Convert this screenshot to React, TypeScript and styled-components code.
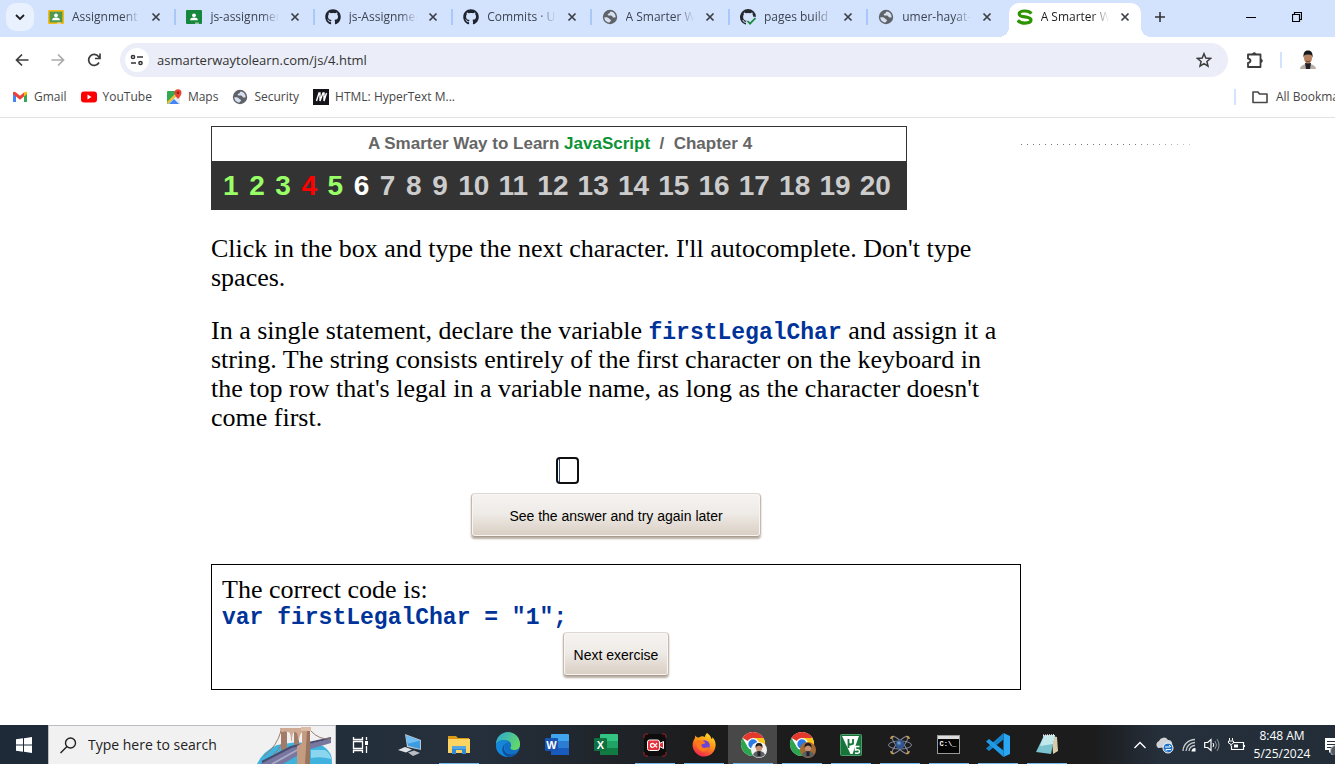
import React from 'react';
import styled, { createGlobalStyle, css } from 'styled-components';
import { FaGithub } from 'react-icons/fa';

const uiFont = '"Open Sans", "Noto Sans", sans-serif';
const sans = '"Liberation Sans", Arial, sans-serif';

const GlobalStyle = createGlobalStyle`
  *, *::before, *::after { box-sizing: border-box; }
  body { margin: 0; background: #fff; overflow: hidden; }
  button, input { font: inherit; color: inherit; margin: 0; padding: 0; }
  button { background: none; border: 0; }
  a { color: inherit; text-decoration: none; }
  svg { display: block; flex: none; }
`;

const Screen = styled.div`
  min-height: 100vh;
  display: flex;
  flex-direction: column;
  overflow: hidden;
`;

/* Browser tabs */
const TabStrip = styled.header`
  display: flex;
  align-items: center;
  height: 37px;
  padding: 0 0 4px 6px;
  background: #d3e2fd;
  font: 12px/16px ${uiFont};
  color: #3c4450;
`;
const TabSearch = styled.button`
  display: grid;
  place-items: center;
  flex: none;
  width: 28px;
  height: 28px;
  margin-right: 6px;
  border-radius: 10px;
  background: #e9f0fe;
`;
const TabList = styled.div`
  display: flex;
  align-self: stretch;
  gap: 6px;
  flex: 0 1 1101px;
  min-width: 0;
`;
const Tab = styled.div<{ $active?: boolean; $divided?: boolean }>`
  position: relative;
  display: flex;
  align-items: center;
  gap: 8px;
  flex: 1 1 0;
  min-width: 0;
  padding: 0 8px;
  ${p => p.$active && css`
    margin: 3px 0 -4px;
    padding-bottom: 7px;
    border-radius: 10px 10px 0 0;
    background: #fff;
    color: #1f1f1f;
    &::before, &::after {
      content: '';
      position: absolute;
      bottom: 0;
      width: 10px;
      height: 10px;
    }
    &::before { left: -10px; background: radial-gradient(circle at 0 0, transparent 10px, #fff 10px); }
    &::after { right: -10px; background: radial-gradient(circle at 100% 0, transparent 10px, #fff 10px); }
  `}
  ${p => p.$divided && css`
    &::after {
      content: '';
      position: absolute;
      right: -4px;
      top: 9px;
      width: 2px;
      height: 16px;
      background: #a8c7fa;
    }
  `}
`;
const TabTitle = styled.a`
  flex: 1;
  min-width: 0;
  overflow: hidden;
  white-space: nowrap;
  mask-image: linear-gradient(90deg, #000 75%, transparent);
`;
const IconButton = styled.button<{ $w?: number }>`
  display: grid;
  place-items: center;
  flex: none;
  width: ${p => p.$w ?? 16}px;
  height: 28px;
`;
const WindowControls = styled.div`
  display: flex;
  margin-left: auto;
  padding-right: 15px;
`;

/* Address bar */
const Toolbar = styled.nav`
  display: flex;
  align-items: center;
  height: 46px;
  padding: 0 9px 0 4px;
  color: #474747;
`;
const Omnibox = styled.label`
  display: flex;
  align-items: center;
  flex: 1;
  min-width: 0;
  height: 34px;
  margin: 0 9px 0 8px;
  padding: 0 6px 0 5px;
  border-radius: 17px;
  background: #ebeef8;
`;
const SiteInfo = styled.span`
  display: grid;
  place-items: center;
  width: 24px;
  height: 24px;
  margin-right: 8px;
  border-radius: 50%;
  background: #fff;
`;
const UrlInput = styled.input`
  flex: 1;
  min-width: 0;
  border: 0;
  outline: 0;
  background: none;
  font: 13px/20px ${uiFont};
  color: #333;
`;
const Rule = styled.span`
  flex: none;
  width: 2px;
  height: 16px;
  background: #d3e2fd;
`;
const ToolbarRule = styled(Rule)`
  margin: 0 8px 0 7px;
`;

/* Bookmarks */
const Bookmarks = styled.nav`
  display: flex;
  align-items: center;
  height: 35px;
  padding: 0 0 7px 12px;
  border-bottom: 1px solid #dfe1e5;
  font: 12px/16px ${uiFont};
  color: #474747;
`;
const Bookmark = styled.a`
  display: flex;
  align-items: center;
  gap: 6px;
  flex: none;
  margin-right: 14px;
  white-space: nowrap;
`;
const AllBookmarks = styled.div`
  display: flex;
  align-items: center;
  gap: 16px;
  flex: none;
  width: 101px;
  margin-left: auto;
  overflow: hidden;
  white-space: nowrap;
`;
const FolderLink = styled(Bookmark)`
  gap: 8px;
`;

/* Lesson */
const Page = styled.main`
  display: flex;
  align-items: flex-start;
  flex: 1;
  padding: 8px 0 0 211px;
`;
const Lesson = styled.article`
  flex: 0 1 810px;
  min-width: 0;
  font: 26px/29px "Liberation Serif", "Times New Roman", serif;
  color: #000;
`;
const DottedLine = styled.div`
  flex: 0 1 170px;
  height: 1px;
  margin-top: 18px;
  background: repeating-linear-gradient(90deg, #777 0 1px, #fff 1px 6px);
  mask-image: linear-gradient(90deg, #000 65%, #0006);
`;
const ChapterBox = styled.section`
  max-width: 696px;
  border: 1px solid #333;
  background: #333;
  font-family: ${sans};
  font-weight: bold;
`;
const ChapterTitle = styled.h1`
  margin: 0;
  padding-left: 2px;
  background: #fff;
  font-size: 17px;
  line-height: 34px;
  text-align: center;
  white-space: pre;
  color: #666;
  em { font-style: normal; color: #0b9335; }
`;
const ChapterNav = styled.nav`
  display: flex;
  justify-content: space-between;
  padding: 2px 15px 0 11px;
  font-size: 28px;
  line-height: 46px;
`;
const Chapter = styled.a<{ $color: string }>`
  min-width: 17px;
  color: ${p => p.$color};
`;
const Paragraph = styled.p`
  max-width: 802px;
  margin: 24px 0;
`;
const Code = styled.code`
  font: bold 23px/23px "Liberation Mono", "Courier New", monospace;
  color: #039;
`;
const AnswerRow = styled.div`
  display: flex;
  justify-content: center;
  margin-top: 25px;
  padding-right: 97px;
`;
const CharInput = styled.input`
  width: 23px;
  height: 27px;
  border: 2px solid #101010;
  border-radius: 4px;
  outline: 0;
  background: linear-gradient(#2b4a80, #2b4a80) 1px 0 / 1px 100% no-repeat #fff;
`;
const Centered = styled.div`
  display: flex;
  justify-content: center;
`;
const Actions = styled(Centered)`
  margin-top: 9px;
`;
const BeigeButton = styled.button<{ $w: number }>`
  width: ${p => p.$w}px;
  height: 44px;
  padding-top: 2px;
  border: 1px solid #c3bbb3;
  border-top-color: #ddd8d4;
  border-bottom-color: #a99d92;
  border-radius: 4px;
  background: linear-gradient(#f5f3f1, #efebe7 45%, #d9cec2);
  box-shadow: inset 0 0 0 1px #f8f5f2, 0 2px 2px #b7ada3;
  font: 14px/20px ${sans};
  color: #000;
`;
const Solution = styled.section`
  margin-top: 27px;
  padding: 11px 10px 13px;
  border: 1px solid #000;
`;
const SolutionText = styled.p`
  margin: 0;
  line-height: 28px;
  code { display: block; line-height: 28px; }
`;

/* Taskbar */
const Taskbar = styled.footer`
  display: flex;
  height: 39px;
  background: linear-gradient(90deg, #1e2a38, #25303c 36%, #1c1c1d 52%, #1c1c1d 82%, #25303c 87%, #222d38);
  font: 12px/18px ${uiFont};
  color: #fff;
`;
const StartButton = styled.button`
  display: grid;
  place-items: center;
  flex: none;
  width: 48px;
`;
const SearchBox = styled.label`
  display: flex;
  align-items: center;
  flex: none;
  width: 288px;
  padding: 0 2px 0 11px;
  border: solid #b9bcc0;
  border-width: 1px 1px 0;
  background: #f1f1f1;
  color: #222;
`;
const SearchInput = styled.input`
  flex: 1;
  min-width: 0;
  margin-left: 11px;
  border: 0;
  outline: 0;
  background: none;
  font: 14px/20px ${uiFont};
  &::placeholder { color: #222; opacity: 1; }
`;
const TaskButtons = styled.div`
  display: flex;
`;
const TaskButton = styled.button<{ $open?: boolean; $active?: boolean }>`
  display: grid;
  place-items: center;
  flex: none;
  width: 49px;
  background: ${p => (p.$active ? '#484848' : 'none')};
  ${p => p.$open && css`
    background-image: linear-gradient(#76b9ed, #76b9ed);
    background-size: 40px 1px;
    background-position: bottom center;
    background-repeat: no-repeat;
  `}
`;
const Tray = styled.div`
  display: flex;
  align-items: center;
  margin-left: auto;
`;
const Clock = styled.time`
  width: 66px;
  margin-right: 10px;
  text-align: center;
  white-space: nowrap;
`;

type IconProps = { children: React.ReactNode; w?: number; h?: number };
const Svg = ({ children, w = 16, h = w }: IconProps) => (
  <svg width={w} height={h} viewBox={`0 0 ${w} ${h}`} fill="none" aria-hidden="true">{children}</svg>
);

const Classroom = ({ frame, board }: { frame: string; board: string }) => (
  <Svg>
    <rect x="0" y="1" width="16" height="14" rx="1" fill={frame} />
    <rect x="1.6" y="2.6" width="12.8" height="10.8" fill={board} />
    <circle cx="8" cy="6.3" r="1.9" fill="#fff" />
    <path d="M4 11.2c.4-2 2-2.6 4-2.600s3.600.6 4 2.600z" fill="#fff" />
    <path d="M9 13.400h4V15H9z" fill="#e8e8e8" opacity=".6" />
  </Svg>
);
const Globe = () => (
  <Svg>
    <circle cx="8" cy="8" r="7.2" fill="#5f6368" />
    <path d="M8.500 2.400c-1 .8-.3 1.900-1.700 2.200-1.500.3-1.500 1.600-.3 1.900 1.700.4 3.300-.3 3.900 1 .5 1.300 1.800.9 3.300.700C13.700 5 11.500 2.700 8.500 2.400zM2.300 8.200c1.800-.2 4.100 0 4.700 1.200.5 1.100 1.900.7 2 1.900.1 1.300-1.300 1-1.400 2.300C4.600 13.400 2.300 11 2.300 8.200z" fill="#d6e0f0" />
  </Svg>
);
const SIcon = () => (
  <Svg><path d="M14.300 4.600C13 2.800 10.800 2 8 2 4.700 2 2.200 2.900 2.200 4.900S4.500 7.400 8 7.900s6 1.200 6 3.200-2.500 3-6 3c-3 0-5.500-.8-7.200-2.700" stroke="#2d9300" strokeWidth="3.200" /></Svg>
);
const Cross = () => (
  <Svg w={10}><path d="M1.500 1.500l7 7m0-7l-7 7" stroke="#3a3f46" strokeWidth="1.700" /></Svg>
);
const PagesIcon = () => (
  <Svg>
    <path fill="#24292f" d="M8 0a8 8 0 0 0-2.500 15.600c.4.100.5-.2.500-.4v-1.500c-2 .4-2.700-.9-2.900-1.600-.4-.7-.9-.9-.8-1 1-.3 1.600.6 1.900 1.100.6.900 1.400.7 1.900.5.100-.5.300-.8.600-1-1.800-.2-3.600-.9-3.600-4 0-.9.300-1.600.8-2.200-.1-.2-.4-1 .1-2.100 0 0 .7-.2 2.200.8a8 8 0 0 1 4 0c1.500-1 2.200-.8 2.200-.8.500 1.100.2 1.900.1 2.100.5.600.8 1.300.8 2.200h2.700A8 8 0 0 0 8 0z" />
    <path d="M7.500 12l2.500 2.700L15.500 9" stroke="#1a8a3c" strokeWidth="1.700" />
  </Svg>
);
const Avatar = () => (
  <Svg w={20}>
    <path d="M2 19c.4-3 2.600-4.200 5.500-5h5c3 .8 5 2 5.500 5z" fill="#b9ada6" />
    <path d="M7 13h6l-1 6H8z" fill="#202026" />
    <ellipse cx="10" cy="8" rx="4" ry="5.600" fill="#b7805f" />
    <path d="M5.500 8C5 3 6.500.5 10 .5S15 3 14.500 8C14 5 13 4.500 10 4.500S6 5 5.500 8z" fill="#17181c" />
    <path d="M8 11q2 1.500 4 0" stroke="#7a4331" />
  </Svg>
);

const Chrome = ({ tone }: { tone: string }) => (
  <Svg w={28} h={28}>
    <circle cx="14" cy="13" r="12" fill="#fff" />
    <path d="M14 13L3.600 7A12 12 0 0 1 24.400 7z" fill="#e2392c" />
    <path d="M14 7h10.400A12 12 0 0 1 14 25l5.200-9z" fill="#fbc615" />
    <path d="M3.600 7A12 12 0 0 0 14 25l5.200-9H8.800z" fill="#2da54e" />
    <circle cx="14" cy="13" r="6" fill="#fff" />
    <circle cx="14" cy="13" r="4.700" fill="#2c7be5" />
    <circle cx="20" cy="19" r="8" fill={tone} />
    <path d="M14 24q1-4 6-4t6 4q-6 5-12 0z" fill="#5c5f68" />
    <path d="M18.500 20h3v5h-3z" fill="#222" />
    <circle cx="20" cy="17" r="3.200" fill="#c58f70" />
    <path d="M16.500 17q-.5-5 3.500-5t3.500 5q-1-2.500-3.500-2.500T16.500 17z" fill="#201b1b" />
  </Svg>
);
const Office = ({ letter, colors }: { letter: string; colors: string[] }) => (
  <Svg w={26} h={24}>
    <rect x="7" y="1" width="18" height="21" rx="1" fill={colors[0]} />
    <path d="M7 8h18v7H7z" fill={colors[1]} />
    <path d="M7 15h18v6q0 1-1 1H7z" fill={colors[2]} />
    <rect x="1" y="5" width="13" height="13" rx="1" fill={colors[3]} />
    <text x="7.500" y="15.500" fill="#fff" fontFamily="Liberation Sans" fontWeight="bold" fontSize="11" textAnchor="middle">{letter}</text>
  </Svg>
);

const taskIcons: { name: string; open?: boolean; active?: boolean; icon: React.ReactNode }[] = [
  { name: 'Task view', icon: (
    <Svg w={18} h={18}>
      <path d="M1.500 1v2.500h9V1M1.500 17v-2.500h9V17M1.500 5.500h9v7h-9zM14.500 1v3M14.500 10v7" stroke="#fff" strokeWidth="1.300" />
      <path d="M13 5h3v4h-3z" fill="#fff" />
    </Svg>) },
  { name: 'This PC', icon: (
    <Svg w={24} h={24}>
      <path d="M7 1l16 6v10L9 14z" fill="#bac8d2" /><path d="M8 2.500l14 5.300v8.200L10 12.800z" fill="#3d9be0" />
      <path d="M8 2.500l14 5.300-12.500 3z" fill="#70bff2" />
      <path d="M7 14l7 2.500-6 3-8-2.500z" fill="#dfe3e5" /><path d="M10 19.500l6-2 6 2.500-7 3z" fill="#b7bdc1" />
    </Svg>) },
  { name: 'File Explorer', open: true, icon: (
    <Svg w={24} h={24}>
      <path d="M1 3h8l2 2h11v4H1z" fill="#d99a18" /><path d="M1 6h22v14H1z" fill="#fcd462" />
      <path d="M5 21v-6q0-2 2-2h10q2 0 2 2v6h-4v-4H9v4z" fill="#2f8bd8" /><path d="M5 13h14v3H5z" fill="#54a6df" />
    </Svg>) },
  { name: 'Edge', icon: (
    <Svg w={26} h={26}>
      <defs><linearGradient id="edgeTop" x1="0" y1="0" x2="1" y2=".5"><stop stopColor="#28a5dc" /><stop offset="1" stopColor="#62d66b" /></linearGradient></defs>
      <circle cx="13" cy="13" r="12" fill="#1270c4" />
      <path d="M1 12A12 12 0 0 1 25 12c.4 4-2.500 6-6 6-3 0-4.500-1.500-3-3.500C17 10 13 8 9 8c-4 0-7 2-8 4z" fill="url(#edgeTop)" />
      <path d="M1.200 12C4 7 12 7 13 11c-4 .5-5 5-2 8.500 2.500 3 7 3.500 10.500 1.800A12 12 0 0 1 1 12z" fill="#1686d9" />
      <path d="M13 11c-5 1-5.500 6-2 9.500 3 2.500 7.500 2.500 10.800.5-2 2.500-5 4-9 4C5 22 6 12 13 11z" fill="#0c4f9b" />
    </Svg>) },
  { name: 'Word', icon: <Office letter="W" colors={['#41a5ee', '#2b7cd3', '#185abd', '#1853b2']} /> },
  { name: 'Excel', icon: <Office letter="X" colors={['#33c481', '#21a366', '#107c41', '#0f7040']} /> },
  { name: 'Screen recorder', open: true, icon: (
    <Svg w={24} h={24}>
      <rect x="1" y="1" width="22" height="22" rx="3" fill="#0e0c0d" />
      <path d="M1 5V3q0-2 2-2h2M19 1h2q2 0 2 2v2M23 19v2q0 2-2 2h-2M5 23H3q-2 0-2-2v-2" stroke="#a3232b" />
      <rect x="4.500" y="7" width="12" height="10.500" rx="2" fill="#e4313c" stroke="#fff" />
      <path d="M16.500 10.500l4-2v7l-4-2z" fill="#e4313c" stroke="#fff" />
      <path d="M14 10q-3 4.500-4.500 4.300a2 2 0 0 1 0-4q1.500.2 4.500 4" stroke="#fff" strokeWidth="1.300" />
    </Svg>) },
  { name: 'Firefox', open: true, icon: (
    <Svg w={26} h={26}>
      <defs><linearGradient id="fox" x1=".8" y1="0" x2=".3" y2="1"><stop stopColor="#ffe226" /><stop offset=".5" stopColor="#ff8a16" /><stop offset="1" stopColor="#f0204f" /></linearGradient></defs>
      <path d="M16 1c3 2 4 4 4.500 6 .8 0 1-1 1-2C24 8 25 11 24.500 14.500A11.500 11.500 0 1 1 4 6c0-1 .2-2 .8-2.500C5 5 6 5.500 8 5.500 10 4 12 4 14 5c0-2 1-3 2-4z" fill="url(#fox)" />
      <circle cx="13.500" cy="13.500" r="5.300" fill="#6b45d6" />
      <path d="M5 9c3-2 6-1 8 .5 2 1 1 2.500-1.500 2.500-2 .5-1 4 2 4 2 0 3-1 4.500-.5C17 19 13 20.500 10 19s-5-5-5-10z" fill="#ff7a1a" />
    </Svg>) },
  { name: 'Chrome, first profile', open: true, active: true, icon: <Chrome tone="#f2f2f2" /> },
  { name: 'Chrome, second profile', open: true, icon: <Chrome tone="#a46b35" /> },
  { name: 'Keil uVision5', open: true, icon: (
    <Svg w={22} h={22}>
      <rect x=".5" y=".5" width="21" height="21" rx="1" fill="#17753c" stroke="#4a9c69" />
      <path d="M2 2h17l-6.500 18h-2z" fill="#fff" /><path d="M8.500 14V5v3.500q0 2 2 2t2.500-2V5v5.500" stroke="#17753c" strokeWidth="1.800" />
      <path d="M19.500 12.500h-4V16q4-1 4 1.500T15 19" stroke="#fff" strokeWidth="1.500" />
    </Svg>) },
  { name: 'Atom', open: true, icon: (
    <Svg w={26} h={26}>
      <g stroke="#85899b"><ellipse cx="13" cy="13" rx="11.500" ry="4" />
        <ellipse cx="13" cy="13" rx="11" ry="3.200" transform="rotate(48 13 13)" /><ellipse cx="13" cy="13" rx="11" ry="3.200" transform="rotate(-48 13 13)" /></g>
      <circle cx="13" cy="12.500" r="4.500" fill="#31568f" /><circle cx="12" cy="11" r="1.800" fill="#6f94c8" />
      <g stroke="#c79d55" strokeWidth="1.600"><path d="M4 7q0-3 3-2.500M19 4.500q3-.5 3 2.500M4 19q0 3 3 2.500M19 21.500q3 .5 3-2.500" /></g>
    </Svg>) },
  { name: 'Command Prompt', open: true, icon: (
    <Svg w={24} h={20}>
      <rect x=".5" y=".5" width="22" height="18" fill="#050505" stroke="#999" /><path d="M1 1h21v3H1z" fill="#ddd" />
      <text x="2.500" y="11" fill="#fff" fontFamily="Liberation Mono" fontWeight="bold" fontSize="7">C:\_</text>
    </Svg>) },
  { name: 'Visual Studio Code', open: true, icon: (
    <Svg w={26} h={26}>
      <path d="M18.500 1L25 4v18l-6.500 3z" fill="#2aa6f2" /><path d="M18.500 1v6.500L4 19l-3-2.500z" fill="#1684cc" /><path d="M18.500 25v-6.500L4 7 1 9.500z" fill="#1f9be8" />
    </Svg>) },
  { name: 'Notepad', open: true, icon: (
    <Svg w={26} h={26}>
      <path d="M18 4l5 1 1 14-5 3z" fill="#d8cda8" /><path d="M10 3.500l11-.5-4 19-15-2z" fill="#7cc3d0" /><path d="M10 3.500l11-.5-2 9-13 2z" fill="#c3e8ec" />
      <path d="M9 3.500L21 3" stroke="#eee" strokeWidth="2" strokeDasharray="1 1" />
    </Svg>) },
];

const github = <FaGithub size={16} color="#1f2430" />;
const tabs: { title: string; icon: React.ReactNode; active?: boolean }[] = [
  { title: 'Assignment details', icon: <Classroom frame="#f5ba15" board="#4f9a50" /> },
  { title: 'js-assignment', icon: <Classroom frame="#16883e" board="#16883e" /> },
  { title: 'js-Assignment', icon: github },
  { title: 'Commits · Umer', icon: github },
  { title: 'A Smarter Way', icon: <Globe /> },
  { title: 'pages build and', icon: <PagesIcon /> },
  { title: 'umer-hayat-js', icon: <Globe /> },
  { title: 'A Smarter Way', icon: <SIcon />, active: true },
];

const bookmarks = [
  { name: 'Gmail', icon: (
    <Svg>
      <path d="M1 3v10h3V6z" fill="#4285f4" /><path d="M15 3v10h-3V6z" fill="#34a853" />
      <path d="M1 5V3.500q1-1.500 3 0L8 6.700l4-3.200V7.500l-4 3.200L4 7.500z" fill="#ea4335" /><path d="M12 3.500q2-1.500 3 0V5l-3 2.500z" fill="#fbbc04" />
    </Svg>) },
  { name: 'YouTube', icon: <Svg><rect y="2.500" width="16" height="11" rx="3" fill="#f00" /><path d="M6.500 5.500v5l4-2.500z" fill="#fff" /></Svg> },
  { name: 'Maps', icon: (
    <Svg>
      <rect x="1" y="2" width="13" height="13" rx="1" fill="#34a853" /><path d="M2 15L13 4l1 3v7q0 1-1 1z" fill="#e9edf0" />
      <path d="M3 15l5-5 5 5z" fill="#4285f4" /><path d="M1 13l11-11 1.500 1.500L2 15z" fill="#fbc02d" />
      <path d="M12 10Q8.500 6 8.500 3.700a3.500 3.500 0 0 1 7 0Q15.500 6 12 10z" fill="#ea4335" /><circle cx="12" cy="3.700" r="1.200" fill="#8c1c13" />
    </Svg>) },
  { name: 'Security', icon: <Globe /> },
  { name: 'HTML: HyperText M...', icon: <Svg><rect width="16" height="16" fill="#15141a" /><path d="M3.500 12L6 4h1v8l3-8h1v8l2.500-8" stroke="#fff" strokeWidth="1.400" /></Svg> },
];

const chapterColor = (n: number) => (n === 4 ? '#f00' : n < 6 ? '#9f6' : n === 6 ? '#fff' : '#ccc');

export default function App() {
  return (
    <Screen>
      <GlobalStyle />
      <TabStrip>
        <TabSearch aria-label="Search tabs"><Svg w={10}><path d="M1 3l4 4 4-4" stroke="#1f1f1f" strokeWidth="1.800" /></Svg></TabSearch>
        <TabList>
          {tabs.map((t, i) => (
            <Tab key={i} $active={t.active} $divided={i < 6}>
              {t.icon}
              <TabTitle href="#">{t.title}</TabTitle>
              <IconButton aria-label="Close tab"><Cross /></IconButton>
            </Tab>
          ))}
        </TabList>
        <IconButton $w={38} aria-label="New tab"><Svg w={12}><path d="M6 1v10M1 6h10" stroke="#333" strokeWidth="1.600" /></Svg></IconButton>
        <WindowControls>
          <IconButton $w={46} aria-label="Minimize"><Svg w={10}><path d="M0 5.500h10" stroke="#000" /></Svg></IconButton>
          <IconButton $w={46} aria-label="Restore"><Svg w={10}><path d="M.5 2.500h7v7h-7zM2.500 2.500v-2h7v7h-2" stroke="#000" strokeWidth="1.200" /></Svg></IconButton>
        </WindowControls>
      </TabStrip>

      <Toolbar>
        <IconButton $w={36} aria-label="Back"><Svg w={14}><path d="M13.500 7H2M7 1.500L1.500 7 7 12.500" stroke="#3c3c3c" strokeWidth="1.700" /></Svg></IconButton>
        <IconButton $w={36} aria-label="Forward"><Svg w={14}><path d="M.5 7H12M7 1.500L12.500 7 7 12.500" stroke="#aaa" strokeWidth="1.700" /></Svg></IconButton>
        <IconButton $w={36} aria-label="Reload"><Svg w={14}><path d="M12 9.500A5.500 5.500 0 1 1 11.500 3.500L13 5.500M13 .5v5H8" stroke="#3c3c3c" strokeWidth="1.700" /></Svg></IconButton>
        <Omnibox>
          <SiteInfo><Svg w={14}><path d="M7 4h6M1 10h5" stroke="#333" strokeWidth="1.600" /><circle cx="3" cy="4" r="1.600" stroke="#333" strokeWidth="1.500" /><circle cx="10.500" cy="10" r="1.600" stroke="#333" strokeWidth="1.500" /></Svg></SiteInfo>
          <UrlInput aria-label="Address" defaultValue="asmarterwaytolearn.com/js/4.html" />
          <IconButton $w={36} aria-label="Bookmark this tab"><Svg w={16}><path d="M8 1.700l1.800 4.400 4.700.4-3.600 3 1.100 4.700L8 11.700l-4 2.500 1.100-4.700-3.600-3 4.700-.4z" stroke="#3c3c3c" strokeWidth="1.500" /></Svg></IconButton>
        </Omnibox>
        <IconButton $w={36} aria-label="Extensions"><Svg w={18}><path d="M2 3.500h12.500V16H2v-4q2.500-.5 2.500-2.200T2 7.500z" stroke="#3c3c3c" strokeWidth="1.800" strokeLinejoin="round" /><path d="M6.500 3.500a1.800 1.800 0 0 1 3.600 0zM14.500 8a1.800 1.800 0 0 1 0 3.600z" fill="#3c3c3c" stroke="#3c3c3c" /></Svg></IconButton>
        <ToolbarRule />
        <IconButton $w={36} aria-label="Profile"><Avatar /></IconButton>
      </Toolbar>

      <Bookmarks>
        {bookmarks.map(b => <Bookmark key={b.name} href="#">{b.icon}{b.name}</Bookmark>)}
        <AllBookmarks>
          <Rule />
          <FolderLink href="#"><Svg><path d="M1 3h5l1.500 2H15v8.500H1z" stroke="#474747" strokeWidth="1.600" strokeLinejoin="round" /></Svg>All Bookmarks</FolderLink>
        </AllBookmarks>
      </Bookmarks>

      <Page>
        <Lesson>
          <ChapterBox>
            <ChapterTitle>A Smarter Way to Learn <em>JavaScript</em>{'  /  '}Chapter 4</ChapterTitle>
            <ChapterNav>
              {Array.from({ length: 20 }, (_, i) => i + 1).map(n => (
                <Chapter key={n} href="#" $color={chapterColor(n)}>{n}</Chapter>
              ))}
            </ChapterNav>
          </ChapterBox>
          <Paragraph>Click in the box and type the next character. I'll autocomplete. Don't type spaces.</Paragraph>
          <Paragraph>
            In a single statement, declare the variable <Code>firstLegalChar</Code> and assign it a string. The string
            consists entirely of the first character on the keyboard in the top row that's legal in a variable name, as
            long as the character doesn't come first.
          </Paragraph>
          <AnswerRow><CharInput aria-label="Next character" maxLength={1} /></AnswerRow>
          <Actions><BeigeButton $w={290}>See the answer and try again later</BeigeButton></Actions>
          <Solution>
            <SolutionText>The correct code is:<Code>var firstLegalChar = "1";</Code></SolutionText>
            <Centered><BeigeButton $w={106}>Next exercise</BeigeButton></Centered>
          </Solution>
        </Lesson>
        <DottedLine />
      </Page>

      <Taskbar>
        <StartButton aria-label="Start"><Svg w={16}><path d="M0 2.300L7 1.300v6.200H0zM8 1.200L16 0v7.500H8zM0 8.500h7v6.200l-7-1zM8 8.500h8V16l-8-1.200z" fill="#fff" /></Svg></StartButton>
        <SearchBox>
          <Svg w={17}><circle cx="10.500" cy="6" r="5" stroke="#222" strokeWidth="1.400" /><path d="M7 9.500L.5 16" stroke="#222" strokeWidth="1.400" /></Svg>
          <SearchInput aria-label="Search" placeholder="Type here to search" />
          <Svg w={76} h={38}>
            <path d="M0 38Q6 25 20 19L40 16 66 20q10 6 9 18z" fill="#3fb3dd" /><path d="M54 24h14q6 4 6 9-9-3-20-1z" fill="#8bd6ee" />
            <path d="M24 5h6v17l-6 3zM37 5h5v13l-5 2z" fill="#a37c68" /><path d="M23 2h25v3q-5 0-6 9h-1q0-8-3-8t-3 9h-1q0-9-3-9H23z" fill="#cfab94" />
            <path d="M3 38L32 22 74 13v4L50 24 26 38z" fill="#77779f" /><path d="M5 36L34 21 74 12" stroke="#4a4b70" strokeWidth="2" /><path d="M15 38L42 23" stroke="#a9a8c6" strokeWidth="2" />
            <path d="M45 3h8v35H40V20l5-3z" fill="#c39c82" /><path d="M44 1h10v4H44z" fill="#dcbca6" /><path d="M50 5h3v33h-5z" fill="#9b745f" />
            <path d="M24 5Q20 20 7 30M54 5q8 9 20 8M28 5q-2 16-12 24" stroke="#9b7b70" />
          </Svg>
        </SearchBox>
        <TaskButtons>
          {taskIcons.map(t => <TaskButton key={t.name} aria-label={t.name} $open={t.open} $active={t.active}>{t.icon}</TaskButton>)}
        </TaskButtons>
        <Tray>
          <IconButton $w={24} aria-label="Show hidden icons"><Svg w={12}><path d="M.5 9L6 3.500 11.500 9" stroke="#fff" strokeWidth="1.400" /></Svg></IconButton>
          <IconButton $w={25} aria-label="OneDrive"><Svg w={18}><path d="M2 12a4 4 0 0 1 1-7 5 5 0 0 1 9-1 4 4 0 0 1 3 7z" fill="#d0d3d6" /><circle cx="12" cy="12" r="5" fill="#1b73c9" stroke="#fff" /><path d="M9 11h5m-1-2l2 2M15 13.500h-5m1 2l-2-2" stroke="#fff" /></Svg></IconButton>
          <IconButton $w={23} aria-label="Network"><Svg w={14}><path d="M1 13A12 12 0 0 1 13 1.500M4 13a9 9 0 0 1 9-8.500M7 13a6 6 0 0 1 6-5.500" stroke="#c9cdd1" strokeWidth="1.300" /><path d="M9.500 13.500a3.500 3.500 0 0 1 4-3.500v3.500z" fill="#fff" /></Svg></IconButton>
          <IconButton $w={23} aria-label="Volume"><Svg w={16}><path d="M.7 5.500h3L7 2.500v11l-3.300-3h-3z" stroke="#fff" strokeWidth="1.200" /><path d="M9 6q1.500 2 0 4" stroke="#fff" /><path d="M11 4q3 4 0 8M13 2q4 6 0 12" stroke="#8b929a" /></Svg></IconButton>
          <IconButton $w={26} aria-label="Battery"><Svg w={17} h={16}><path d="M6 5.500h9.500v7H3.500V9M16.500 8v2" stroke="#fff" strokeWidth="1.200" /><path d="M6 7.500h4v3H6z" fill="#fff" /><path d="M1.500 1v2.500M4.500 1v2.500M.5 4h5v2q-2 3-5 0zM3 7v2" stroke="#fff" /></Svg></IconButton>
          <Clock>8:48 AM<br />5/25/2024</Clock>
          <IconButton $w={10} aria-label="Notifications"><Svg w={10} h={20}><path d="M0 3h10v12H7l-3 3v-3H0z" fill="#fff" /><path d="M2 6.500h8M2 9.500h8M2 12.500h5" stroke="#25303c" /><circle cx="11" cy="16" r="5.500" fill="#555b62" stroke="#b8bcc0" /></Svg></IconButton>
        </Tray>
      </Taskbar>
    </Screen>
  );
}
